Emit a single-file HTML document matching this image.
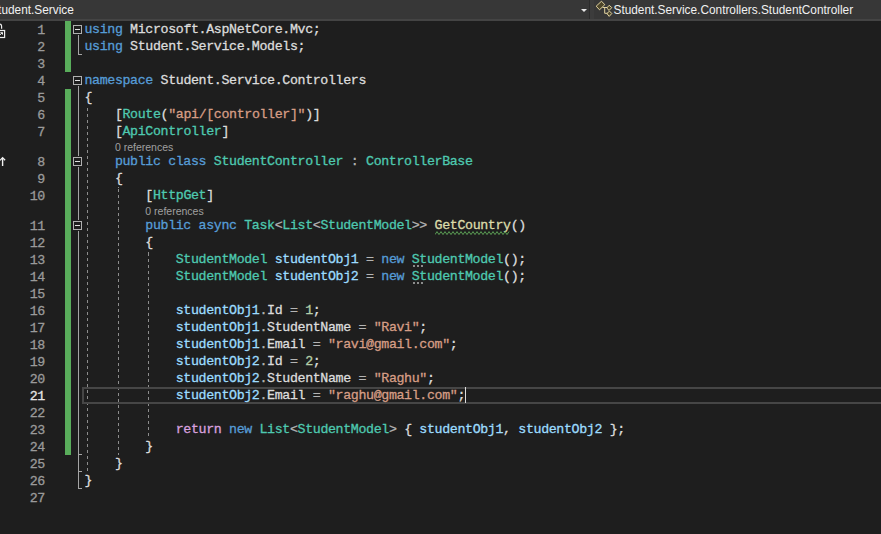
<!DOCTYPE html>
<html><head><meta charset="utf-8"><style>
html,body{margin:0;padding:0;}
body{width:881px;height:534px;overflow:hidden;background:#1e1e1e;position:relative;font-family:"Liberation Mono",monospace;}
#hdr{position:absolute;left:0;top:0;width:881px;height:19px;background:#373737;border-bottom:2px solid #444444;}
#hdr .t1{position:absolute;left:-9.8px;top:3px;font:11.85px "Liberation Sans",sans-serif;color:#f1f1f1;white-space:pre;}
#hdr .t2{position:absolute;left:613.5px;top:3px;font:11.85px "Liberation Sans",sans-serif;color:#f1f1f1;white-space:pre;}
#hdr .sep{position:absolute;left:589px;top:0;width:1px;height:19px;background:#2b2b2b;}
#hdr .sep2{position:absolute;left:590px;top:0;width:4px;height:19px;background:#3c3c3c;}
#hdr .arr{position:absolute;left:580.5px;top:8.5px;width:0;height:0;border-left:3.3px solid transparent;border-right:3.3px solid transparent;border-top:3.6px solid #e8e8e8;}
#hdr svg{position:absolute;left:592px;top:0;}
.ln{position:absolute;left:0;width:44.9px;margin-top:1px;text-align:right;height:17px;line-height:17px;font-size:13.3px;letter-spacing:-0.37px;color:#9a9a9a;-webkit-text-stroke:0.3px;white-space:pre;}
.ln.cur{color:#e4e4e4;}
.c{position:absolute;left:84.44px;height:17px;line-height:17px;font-size:13.3px;letter-spacing:-0.370px;color:#dcdcdc;-webkit-text-stroke:0.3px;white-space:pre;}
.cl{position:absolute;height:13px;line-height:13px;font:10.5px "Liberation Sans",sans-serif;color:#a0a0a0;padding-top:1px;white-space:pre;}
.k{color:#569cd6} .t{color:#4ec9b0} .p{color:#dcdcdc} .v{color:#9cdcfe} .s{color:#d69d85} .n{color:#b5cea8} .m{color:#dcdcaa} .r{color:#d8a0df} .o{color:#b4b4b4}
.gb{position:absolute;left:65px;width:6px;background:#59ad5b;}
.ob{position:absolute;left:73px;width:7px;height:7px;border:1px solid #b0b0b0;background:#1e1e1e;box-shadow:0 0 0 1px #1e1e1e;}
.ob:after{content:"";position:absolute;left:1px;top:3px;width:5px;height:1px;background:#e0e0e0;}
.ov{position:absolute;left:78px;width:1px;background:#a5a5a5;}
.ot{position:absolute;left:78px;width:4px;height:1px;background:#a5a5a5;}
.ig{position:absolute;width:1px;background:repeating-linear-gradient(to bottom,#8c8c8c 0 3px,transparent 3px 6px);}
#cur{position:absolute;left:82px;top:387px;width:805px;height:13px;border:2px solid #464646;}
#caret{position:absolute;left:465px;top:387px;width:1px;height:16px;background:#dcdcdc;}
</style></head><body>
<div id="hdr"><span class="t1">Student.Service</span><div class="arr"></div><div class="sep"></div><div class="sep2"></div><svg width="24" height="19" viewBox="0 0 24 19"><g fill="#4d4529" stroke="#f2e2aa" stroke-width="0.9" stroke-linejoin="miter"><polygon points="4.2,6.2 9.5,1.2 12.8,4.7 7.5,9.8"/><polygon points="14.7,8 17.2,5.3 19.8,7.6 17.1,10.4"/><polygon points="14.9,13.5 17.5,11.1 19.8,13.5 17.2,16.4"/><path d="M10.6,7.5 H15 M12.7,7.5 V13.3 H15.4" fill="none"/></g></svg><span class="t2">Student.Service.Controllers.StudentController</span></div>
<div class="gb" style="top:21px;height:51px"></div>
<div class="gb" style="top:89px;height:366px"></div>
<div class="ob" style="top:25px"></div><div class="ov" style="top:35px;height:20px"></div><div class="ot" style="top:54px"></div><div class="ob" style="top:76px"></div><div class="ov" style="top:86px;height:403px"></div><div class="ot" style="top:488px"></div><div class="ob" style="top:157px"></div><div class="ov" style="top:167px;height:305px"></div><div class="ot" style="top:471px"></div><div class="ob" style="top:221px"></div><div class="ov" style="top:231px;height:224px"></div><div class="ot" style="top:454px"></div>
<div class="ig" style="left:87px;top:106px;height:366px;background-position:0 2px"></div><div class="ig" style="left:118px;top:187px;height:268px;background-position:0 2px"></div><div class="ig" style="left:148px;top:251px;height:187px;background-position:0 2px"></div>
<div id="cur"></div>
<div class="ln" style="top:21px">1</div>
<div class="c" style="top:21px"><span class="k">using</span><span class="p"> Microsoft.AspNetCore.Mvc;</span></div>
<div class="ln" style="top:38px">2</div>
<div class="c" style="top:38px"><span class="k">using</span><span class="p"> Student.Service.Models;</span></div>
<div class="ln" style="top:55px">3</div>
<div class="ln" style="top:72px">4</div>
<div class="c" style="top:72px"><span class="k">namespace</span><span class="p"> Student.Service.Controllers</span></div>
<div class="ln" style="top:89px">5</div>
<div class="c" style="top:89px"><span class="p">{</span></div>
<div class="ln" style="top:106px">6</div>
<div class="c" style="top:106px"><span class="p">    [</span><span class="t">Route</span><span class="p">(</span><span class="s">&quot;api/[controller]&quot;</span><span class="p">)]</span></div>
<div class="ln" style="top:123px">7</div>
<div class="c" style="top:123px"><span class="p">    [</span><span class="t">ApiController</span><span class="p">]</span></div>
<div class="cl" style="top:140px;left:114.88px">0 references</div>
<div class="ln" style="top:153px">8</div>
<div class="c" style="top:153px"><span class="k">    public class </span><span class="t">StudentController</span><span class="o"> : </span><span class="t">ControllerBase</span></div>
<div class="ln" style="top:170px">9</div>
<div class="c" style="top:170px"><span class="p">    {</span></div>
<div class="ln" style="top:187px">10</div>
<div class="c" style="top:187px"><span class="p">        [</span><span class="t">HttpGet</span><span class="p">]</span></div>
<div class="cl" style="top:204px;left:145.32px">0 references</div>
<div class="ln" style="top:217px">11</div>
<div class="c" style="top:217px"><span class="k">        public async </span><span class="t">Task</span><span class="o">&lt;</span><span class="t">List</span><span class="o">&lt;</span><span class="t">StudentModel</span><span class="o">&gt;&gt; </span><span class="m">GetCountry</span><span class="p">()</span></div>
<div class="ln" style="top:234px">12</div>
<div class="c" style="top:234px"><span class="p">        {</span></div>
<div class="ln" style="top:251px">13</div>
<div class="c" style="top:251px"><span class="t">            StudentModel</span><span class="p"> </span><span class="v">studentObj1</span><span class="o"> = </span><span class="k">new </span><span class="t">StudentModel</span><span class="p">();</span></div>
<div class="ln" style="top:268px">14</div>
<div class="c" style="top:268px"><span class="t">            StudentModel</span><span class="p"> </span><span class="v">studentObj2</span><span class="o"> = </span><span class="k">new </span><span class="t">StudentModel</span><span class="p">();</span></div>
<div class="ln" style="top:285px">15</div>
<div class="ln" style="top:302px">16</div>
<div class="c" style="top:302px"><span class="v">            studentObj1</span><span class="o">.</span><span class="p">Id</span><span class="o"> = </span><span class="n">1</span><span class="p">;</span></div>
<div class="ln" style="top:319px">17</div>
<div class="c" style="top:319px"><span class="v">            studentObj1</span><span class="o">.</span><span class="p">StudentName</span><span class="o"> = </span><span class="s">&quot;Ravi&quot;</span><span class="p">;</span></div>
<div class="ln" style="top:336px">18</div>
<div class="c" style="top:336px"><span class="v">            studentObj1</span><span class="o">.</span><span class="p">Email</span><span class="o"> = </span><span class="s">&quot;ravi@gmail.com&quot;</span><span class="p">;</span></div>
<div class="ln" style="top:353px">19</div>
<div class="c" style="top:353px"><span class="v">            studentObj2</span><span class="o">.</span><span class="p">Id</span><span class="o"> = </span><span class="n">2</span><span class="p">;</span></div>
<div class="ln" style="top:370px">20</div>
<div class="c" style="top:370px"><span class="v">            studentObj2</span><span class="o">.</span><span class="p">StudentName</span><span class="o"> = </span><span class="s">&quot;Raghu&quot;</span><span class="p">;</span></div>
<div class="ln cur" style="top:387px">21</div>
<div class="c" style="top:387px"><span class="v">            studentObj2</span><span class="o">.</span><span class="p">Email</span><span class="o"> = </span><span class="s">&quot;raghu@gmail.com&quot;</span><span class="p">;</span></div>
<div class="ln" style="top:404px">22</div>
<div class="ln" style="top:421px">23</div>
<div class="c" style="top:421px"><span class="r">            return</span><span class="k"> new </span><span class="t">List</span><span class="o">&lt;</span><span class="t">StudentModel</span><span class="o">&gt;</span><span class="p"> { </span><span class="v">studentObj1</span><span class="p">, </span><span class="v">studentObj2</span><span class="p"> };</span></div>
<div class="ln" style="top:438px">24</div>
<div class="c" style="top:438px"><span class="p">        }</span></div>
<div class="ln" style="top:455px">25</div>
<div class="c" style="top:455px"><span class="p">    }</span></div>
<div class="ln" style="top:472px">26</div>
<div class="c" style="top:472px"><span class="p">}</span></div>
<div class="ln" style="top:489px">27</div>
<div id="caret"></div>
<svg style="position:absolute;left:435px;top:231px" width="78" height="5"><polyline points="0.0,3.6 2.0,0.6 4.0,3.6 6.0,0.6 8.0,3.6 10.0,0.6 12.0,3.6 14.0,0.6 16.0,3.6 18.0,0.6 20.0,3.6 22.0,0.6 24.0,3.6 26.0,0.6 28.0,3.6 30.0,0.6 32.0,3.6 34.0,0.6 36.0,3.6 38.0,0.6 40.0,3.6 42.0,0.6 44.0,3.6 46.0,0.6 48.0,3.6 50.0,0.6 52.0,3.6 54.0,0.6 56.0,3.6 58.0,0.6 60.0,3.6 62.0,0.6 64.0,3.6 66.0,0.6 68.0,3.6 70.0,0.6 72.0,3.6 74.0,0.6" fill="none" stroke="#5b9d55" stroke-width="1"/></svg>
<div style="position:absolute;left:413px;top:265px;width:2px;height:2px;background:#8c8c8c"></div><div style="position:absolute;left:417px;top:265px;width:2px;height:2px;background:#8c8c8c"></div><div style="position:absolute;left:421px;top:265px;width:2px;height:2px;background:#8c8c8c"></div><div style="position:absolute;left:413px;top:282px;width:2px;height:2px;background:#8c8c8c"></div><div style="position:absolute;left:417px;top:282px;width:2px;height:2px;background:#8c8c8c"></div><div style="position:absolute;left:421px;top:282px;width:2px;height:2px;background:#8c8c8c"></div>
<svg style="position:absolute;left:0;top:20px" width="10" height="20" viewBox="0 0 10 20"><g fill="none" stroke="#eeeeee" stroke-width="1.2"><path d="M-2,4.1 Q1.6,3.6 1.6,6.2 V8.8"/><rect x="-3" y="10.5" width="7.6" height="7"/><path d="M-0.6,15.4 L2.4,12.6 M0.4,12.7 H2.5 V14.6" stroke-width="1"/></g></svg>
<svg style="position:absolute;left:0;top:150px" width="10" height="20" viewBox="0 0 10 20"><g fill="none" stroke="#f2f2f2" stroke-width="1.4"><path d="M2.6,8 V16"/><path d="M0.1,10.3 L2.6,7.6 L5.1,10.3" stroke-width="1.3"/></g></svg>
</body></html>
